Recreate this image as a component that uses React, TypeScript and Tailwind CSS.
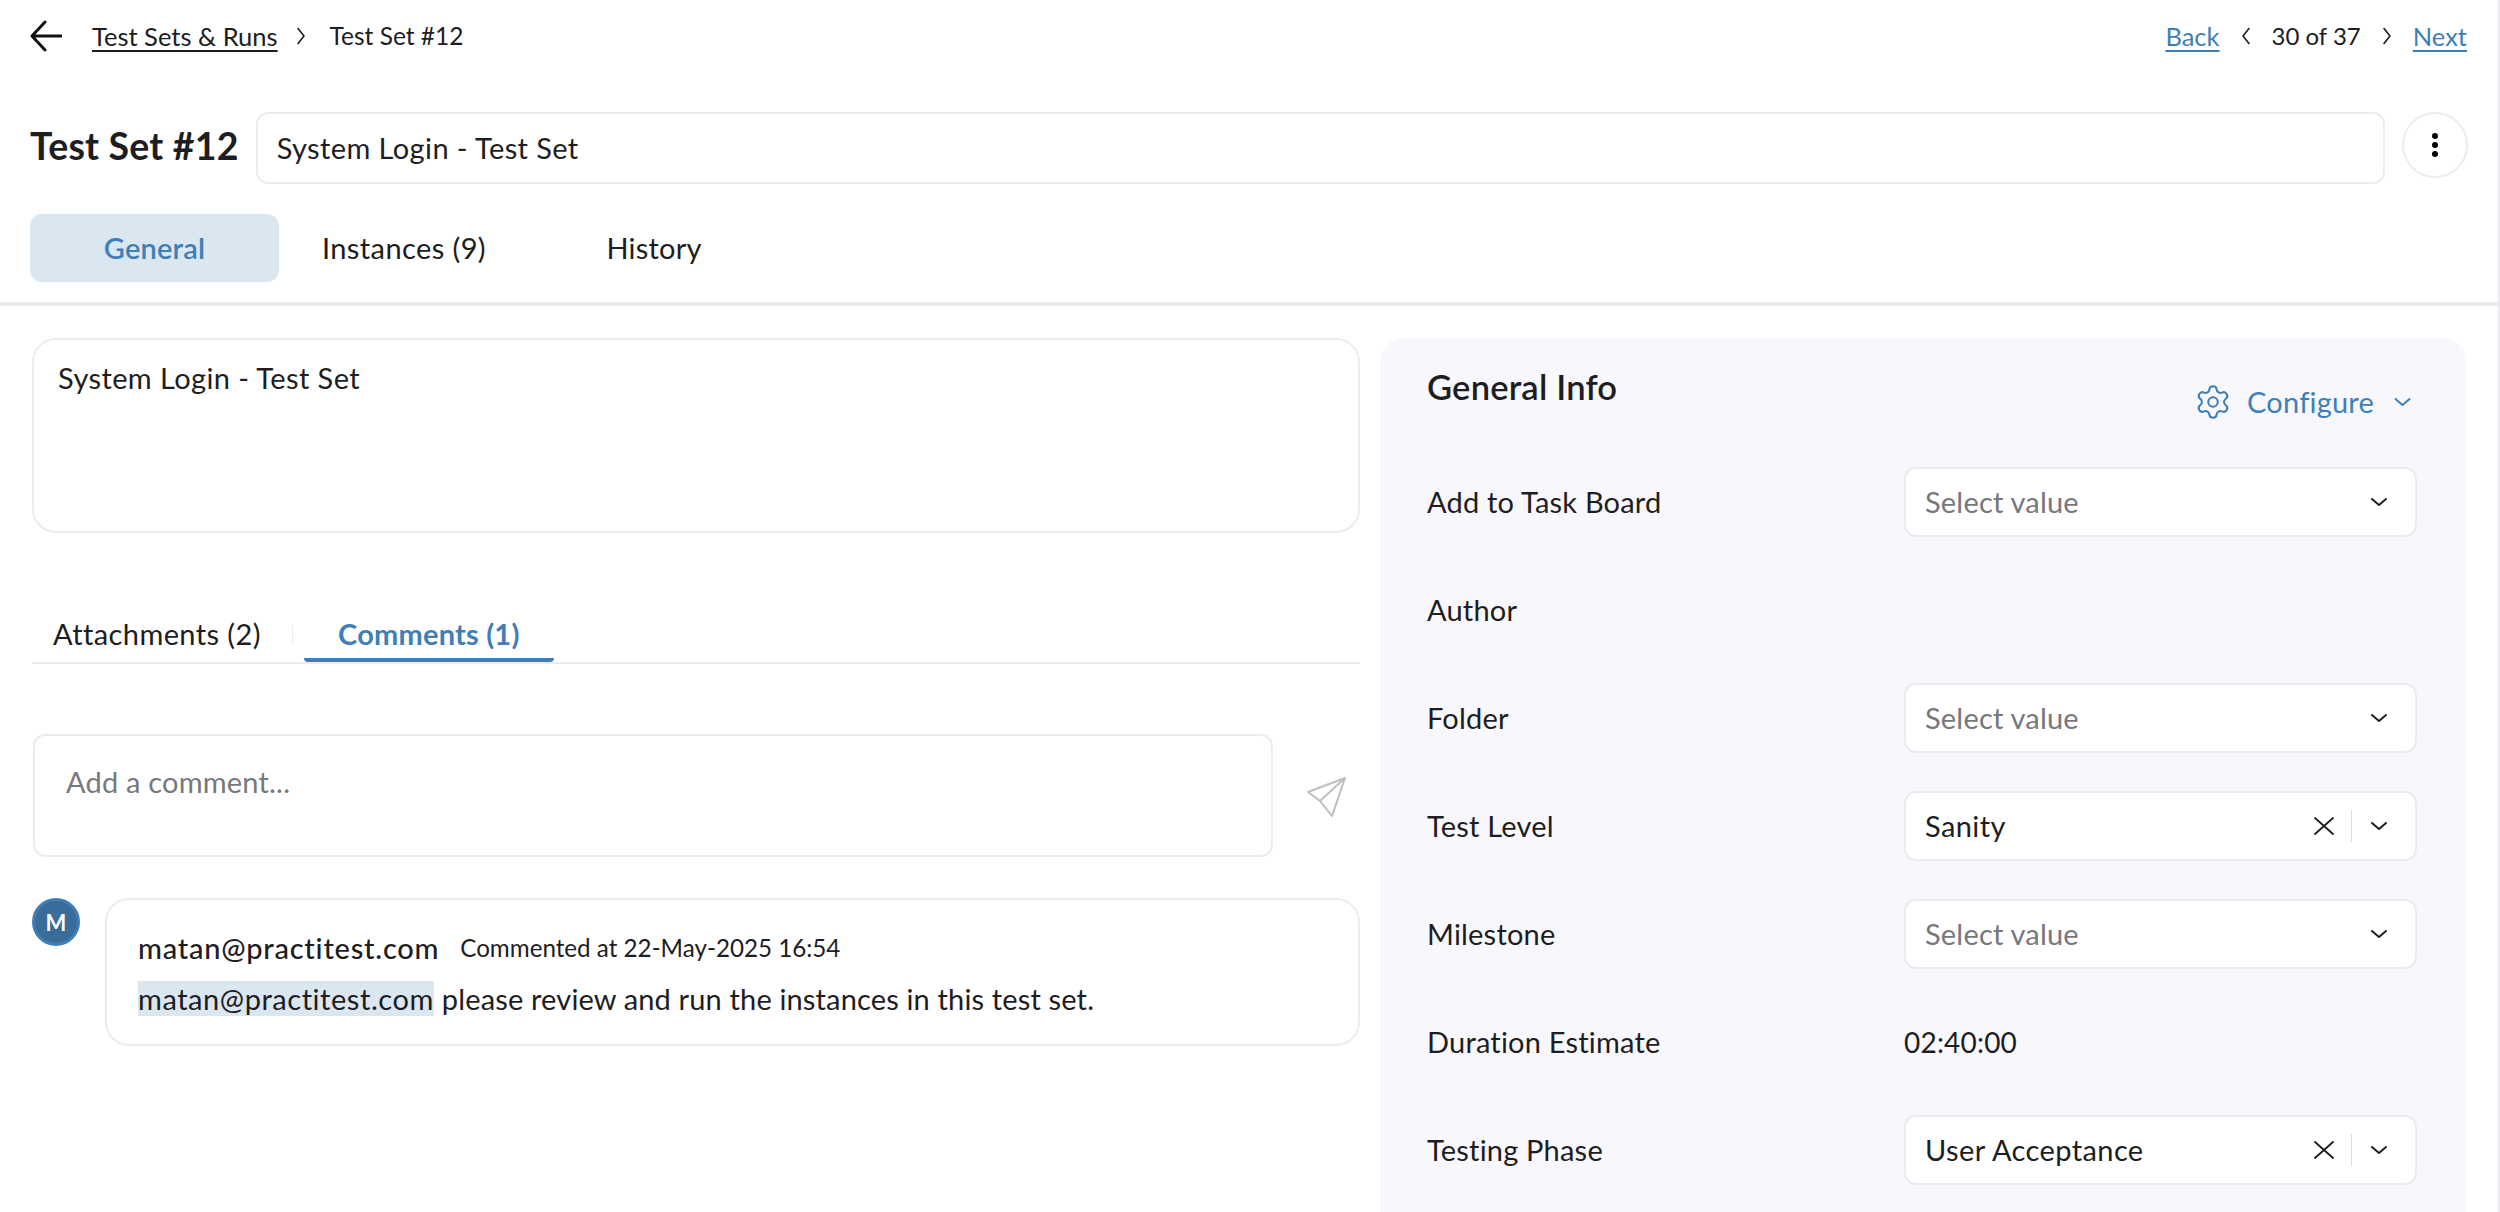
import React from "react";
import { Settings } from "lucide-react";

function Chevron({ dir = "right", className = "" }: { dir?: "left" | "right"; className?: string }) {
  return (
    <svg viewBox="0 0 12 20" className={className} fill="none" stroke="currentColor" strokeWidth="1.6" strokeLinecap="round" strokeLinejoin="round">
      {dir === "right" ? <path d="M3 2.5l6 7.5-6 7.5" /> : <path d="M9 2.5l-6 7.5 6 7.5" />}
    </svg>
  );
}

function ChevronDown({ className = "" }: { className?: string }) {
  return (
    <svg viewBox="0 0 18 12" className={className} fill="none" stroke="currentColor" strokeWidth="2" strokeLinecap="round" strokeLinejoin="round">
      <path d="M2 3l7 6 7-6" />
    </svg>
  );
}

function Select({ value }: { value?: string }) {
  return (
    <div className="w-[513px] h-[70px] bg-white border-2 border-[#ecebf2] rounded-xl flex items-center pl-[19px] pr-[27px]">
      <span className={value ? "flex-1 text-[#1d1d22] tracking-[0.4px]" : "flex-1 text-[#77777c]"}>{value ?? "Select value"}</span>
      {value && (
        <>
          <svg viewBox="0 0 20 18" className="w-[20px] h-[18px] text-[#1d1d22]" fill="none" stroke="currentColor" strokeWidth="1.8" strokeLinecap="round">
            <path d="M1 1l18 16M19 1L1 17" />
          </svg>
          <div className="w-px h-[32px] bg-[#dcdce2] ml-[17px] mr-[18px]" />
        </>
      )}
      <ChevronDown className="w-[18px] h-[12px] text-[#1d1d22]" />
    </div>
  );
}

function Field({ label, children }: { label: string; children?: React.ReactNode }) {
  return (
    <div className="flex items-center h-[108px]">
      <span className="w-[477px] text-[#1d1d22]">{label}</span>
      {children}
    </div>
  );
}

export default function App() {
  return (
    <div className="h-[1212px] overflow-hidden bg-white border-r-2 border-[#ecebf2] text-[29px] tracking-[0.2px] text-[#1d1d22] font-['Lato','Noto_Sans',sans-serif]">
      <div className="flex items-center justify-between h-[72px] pl-[30px] pr-[31px] text-[25.5px] tracking-normal">
        <div className="flex items-center">
          <svg viewBox="0 0 32 32" className="w-[32px] h-[32px]" fill="none" stroke="#111" strokeWidth="3" strokeLinecap="round" strokeLinejoin="round">
            <path d="M31 16H2M15 2L2 16l13 14" />
          </svg>
          <a className="ml-[30px] underline decoration-2 underline-offset-4">Test Sets &amp; Runs</a>
          <Chevron className="w-[12px] h-[20px] ml-[17px] mr-[23px]" />
          <span className="text-[24.5px]">Test Set #12</span>
        </div>
        <div className="flex items-center">
          <a className="text-[#3f7fb7] underline decoration-2 underline-offset-4">Back</a>
          <Chevron dir="left" className="w-[12px] h-[20px] ml-[20px] mr-[20px]" />
          <span className="text-[24px]">30 of 37</span>
          <Chevron className="w-[12px] h-[20px] ml-[20px] mr-[20px]" />
          <a className="text-[#3f7fb7] underline decoration-2 underline-offset-4">Next</a>
        </div>
      </div>

      <div className="flex items-start mt-[40px] pl-[30px] pr-[30px]">
        <h1 className="h-[72px] leading-[68px] text-[37.5px] font-bold whitespace-nowrap">Test Set #12</h1>
        <div className="flex-1 ml-[17px] h-[72px] border-2 border-[#ecebf2] rounded-xl flex items-center pl-[19px] tracking-[0.4px]">System Login - Test Set</div>
        <button className="ml-[17px] w-[66px] h-[66px] rounded-full border-2 border-[#ecebf2] flex flex-col items-center justify-center gap-[3px]">
          <span className="w-[6px] h-[6px] rounded-full bg-black" />
          <span className="w-[6px] h-[6px] rounded-full bg-black" />
          <span className="w-[6px] h-[6px] rounded-full bg-black" />
        </button>
      </div>

      <div className="flex mt-[30px] pl-[30px] pb-[20px] border-b-4 border-[#ecebf2]">
        <div className="w-[249px] h-[68px] rounded-xl bg-[#dae6f0] text-[#3f7fb7] font-semibold flex items-center justify-center">General</div>
        <div className="w-[250px] h-[68px] flex items-center justify-center tracking-[0.4px]">Instances (9)</div>
        <div className="w-[250px] h-[68px] flex items-center justify-center">History</div>
      </div>

      <div className="flex items-start mt-[32px] pl-[32px]">
        <div className="w-[1328px]">
          <div className="h-[195px] border-2 border-[#ecebf2] rounded-3xl pl-[24px] pt-[16px] tracking-[0.4px]">System Login - Test Set</div>

          <div className="flex mt-[75px] border-b-2 border-[#ecebf2]">
            <div className="h-[54px] flex items-center pl-[21px] pb-[2px] tracking-[0.4px]">Attachments (2)</div>
            <div className="w-px h-[20px] self-center bg-[#ecebf2] ml-[31px] mr-[11px]" />
            <div className="h-[54px] w-[250px] pt-[2px] border-b-4 border-[#3f7fb7] rounded-b-sm text-[#3f7fb7] font-bold flex items-center justify-center">Comments (1)</div>
          </div>

          <div className="flex items-start mt-[70px] ml-px">
            <div className="w-[1240px] h-[123px] border-2 border-[#ecebf2] rounded-xl pl-[31px] pt-[24px] text-[#77777c]">Add a comment...</div>
            <svg viewBox="0 0 40 40" className="w-[40px] h-[40px] ml-[33px] mt-[43px]" fill="none" stroke="#bdbdc2" strokeWidth="2" strokeLinejoin="round">
              <path d="M39 1L2 15l12 9zM39 1L14 24l12 15z" />
            </svg>
          </div>

          <div className="flex items-start mt-[41px]">
            <div className="w-[48px] h-[48px] rounded-full bg-[#3a6c99] border-[3px] border-[#3f7fb7] text-white text-[22px] font-bold flex items-center justify-center">M</div>
            <div className="ml-[25px] w-[1255px] h-[148px] border-2 border-[#ecebf2] rounded-3xl pl-[31px] pt-[30px]">
              <div className="flex items-center h-[36px]">
                <span className="font-medium tracking-[0.75px]">matan@practitest.com</span>
                <span className="ml-[21px] text-[24.2px] tracking-normal">Commented at 22-May-2025 16:54</span>
              </div>
              <div className="flex items-center mt-[15px] h-[35px]">
                <span className="h-[35px] leading-[35px] bg-[#dae6f0] tracking-[0.55px]">matan@practitest.com</span>
                <span className="ml-[8px] tracking-[0.15px]">please review and run the instances in this test set.</span>
              </div>
            </div>
          </div>
        </div>

        <div className="ml-[20px] w-[1086px] h-[880px] bg-[#f8f8fc] rounded-t-3xl pl-[47px]">
          <div className="flex items-start justify-between h-[110px] pr-[54px]">
            <h2 className="mt-[29px] leading-[40px] text-[34.5px] font-semibold">General Info</h2>
            <div className="mt-[44px] h-[40px] flex items-center text-[#3f7fb7]">
              <Settings className="w-[38px] h-[38px]" strokeWidth={1.3} />
              <span className="ml-[15px]">Configure</span>
              <ChevronDown className="w-[19px] h-[12px] ml-[19px]" />
            </div>
          </div>
          <Field label="Add to Task Board"><Select /></Field>
          <Field label="Author" />
          <Field label="Folder"><Select /></Field>
          <Field label="Test Level"><Select value="Sanity" /></Field>
          <Field label="Milestone"><Select /></Field>
          <Field label="Duration Estimate"><span className="text-[28px]">02:40:00</span></Field>
          <Field label="Testing Phase"><Select value="User Acceptance" /></Field>
        </div>
      </div>
    </div>
  );
}
